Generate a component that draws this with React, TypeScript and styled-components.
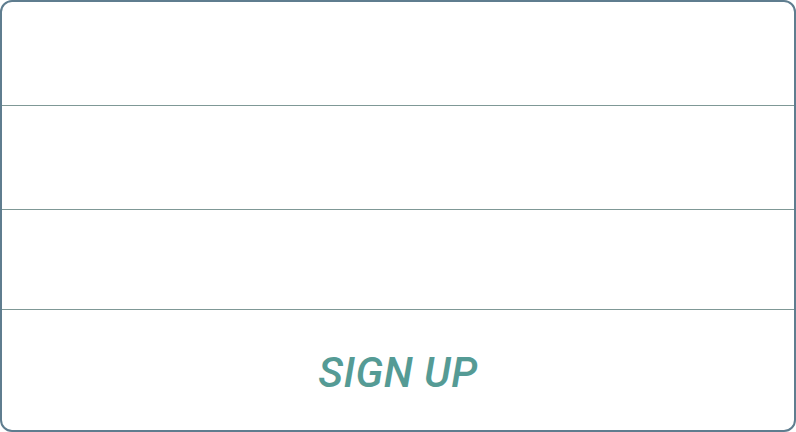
import React from "react";
import styled, { createGlobalStyle } from "styled-components";

const Global = createGlobalStyle`
  html, body { margin: 0; padding: 0; background: #ffffff; }
  body { font-family: Roboto, sans-serif; }
  * { box-sizing: border-box; }
`;

const Card = styled.form`
  width: 796px;
  height: 432px;
  border: 2px solid #5f7d8f;
  border-radius: 12px;
  background: #ffffff;
  display: grid;
  grid-template-rows: 104px 104px 100px 1fr;
  overflow: hidden;
`;

const Field = styled.div`
  border-bottom: 1px solid #7f9896;
`;

const Submit = styled.button`
  border: none;
  background: transparent;
  color: #559b95;
  font-family: Roboto, "DejaVu Sans", sans-serif;
  font-style: italic;
  font-weight: 500;
  font-size: 42px;
  letter-spacing: 0.5px;
  display: flex;
  align-items: center;
  justify-content: center;
  padding: 4px 0 0;
  cursor: pointer;
`;

export default function App() {
  return (
    <>
      <Global />
      <Card>
        <Field />
        <Field />
        <Field />
        <Submit type="button">SIGN UP</Submit>
      </Card>
    </>
  );
}
